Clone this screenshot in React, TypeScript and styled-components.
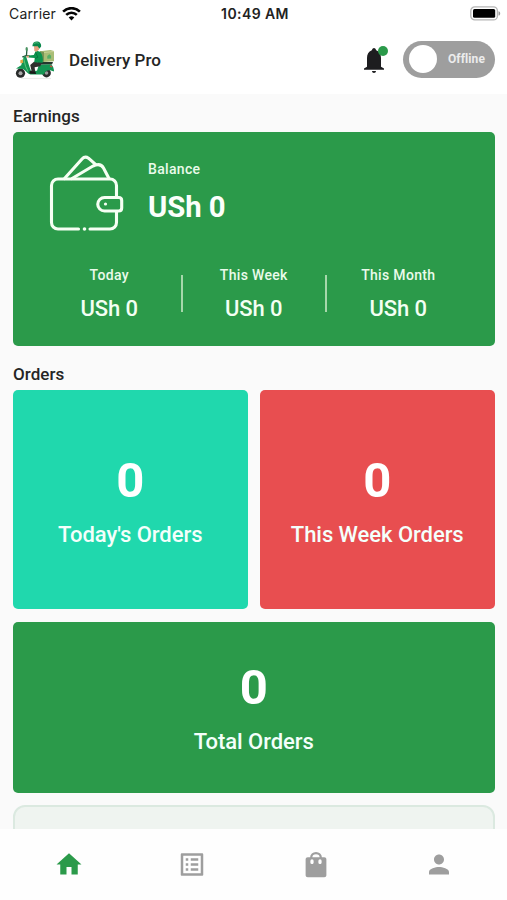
import React from "react";
import styled, { createGlobalStyle } from "styled-components";

const GREEN = "#2b9a4a";

const GlobalStyle = createGlobalStyle`
  * { box-sizing: border-box; }
  body { margin: 0; background: #fff; font-family: Roboto, "Liberation Sans", sans-serif; }
`;

const Screen = styled.div`
  width: 507px;
  height: 900px;
  display: flex;
  flex-direction: column;
  overflow: hidden;
  background: #fff;
`;

const StatusBar = styled.div`
  height: 27px;
  flex: none;
  display: grid;
  grid-template-columns: 1fr auto 1fr;
  align-items: center;
  padding: 0 6px 0 9px;
  font-family: Inter, sans-serif;
  font-size: 14px;
  color: #222;
`;

const Carrier = styled.div`
  display: flex;
  align-items: center;
  gap: 6px;
  letter-spacing: 0.15px;
`;

const Clock = styled.div`
  font-weight: 600;
  font-size: 14px;
  letter-spacing: 0.42px;
`;

const BatteryIcon = styled.svg`
  justify-self: end;
`;

const Header = styled.header`
  height: 67px;
  flex: none;
  display: flex;
  align-items: center;
  padding: 0 12px 2px 14px;
`;

const Title = styled.h1`
  flex: 1;
  margin: 0 0 0 13px;
  font-size: 17px;
  font-weight: 500;
  letter-spacing: 0.06px;
  color: #252525;
`;

const BellWrap = styled.div`
  position: relative;
  width: 24px;
  height: 28px;
  margin-right: 16px;
`;

const BellDot = styled.span`
  position: absolute;
  top: 0;
  right: -1px;
  width: 10px;
  height: 10px;
  border-radius: 50%;
  background: ${GREEN};
`;

const Toggle = styled.div`
  width: 92px;
  height: 37px;
  border-radius: 19px;
  background: #9e9e9e;
  display: flex;
  align-items: center;
  justify-content: space-between;
  padding: 0 10px 1px 6px;
  color: #ececec;
  font-size: 12px;
  font-weight: 700;
  letter-spacing: 0.1px;
`;

const Knob = styled.span`
  width: 28px;
  height: 28px;
  border-radius: 50%;
  background: #fff;
`;

const Content = styled.main`
  flex: 1;
  min-height: 0;
  overflow: hidden;
  padding: 11px 12.5px 0 13px;
  background: #fafafa;
`;

const SectionTitle = styled.h2<{ $spaced?: boolean }>`
  margin: ${(p) => (p.$spaced ? "17px 0 5px" : "0 0 5px")};
  height: 22px;
  line-height: 22px;
  font-size: 17px;
  font-weight: 500;
  letter-spacing: 0.04px;
  color: #252525;
`;

const EarningsCard = styled.section`
  height: 213.5px;
  border-radius: 5px;
  background: ${GREEN};
  color: #fff;
  padding-top: 21px;
`;

const BalanceRow = styled.div`
  display: flex;
  height: 80px;
  padding-left: 35px;
`;

const BalanceText = styled.div`
  margin-left: 22px;
  padding-top: 6px;
`;

const Label = styled.div`
  font-size: 14px;
  line-height: 20px;
  font-weight: 500;
  letter-spacing: 0.32px;
  color: #eafbea;
`;

const Balance = styled.div`
  margin-top: 8px;
  font-size: 29.3px;
  line-height: 40px;
  font-weight: 700;
  letter-spacing: -0.05px;
  color: #fbfffb;
`;

const Periods = styled.div`
  display: grid;
  grid-template-columns: 1fr 1fr 1fr;
  margin: 32px 24px 0;
`;

const Period = styled.div`
  position: relative;
  text-align: center;
  & + &::before {
    content: "";
    position: absolute;
    left: -1px;
    top: 10px;
    width: 2px;
    height: 37px;
    background: #a6d8ab;
  }
`;

const Amount = styled.div`
  margin-top: 9px;
  font-size: 22px;
  line-height: 30px;
  font-weight: 500;
  letter-spacing: -0.1px;
  color: #f3fff3;
`;

const Orders = styled.div`
  display: grid;
  grid-template-columns: 1fr 1fr;
  grid-template-rows: 219.5px 171px 110px;
  gap: 12.5px;
`;

const OrderTile = styled.div<{ $color: string; $wide?: boolean }>`
  grid-column: ${(p) => (p.$wide ? "1 / -1" : "auto")};
  display: flex;
  flex-direction: column;
  align-items: center;
  justify-content: center;
  border-radius: 5px;
  background: ${(p) => p.$color};
  color: #fff;
  padding-top: ${(p) => (p.$wide ? "1px" : "2px")};
`;

const Count = styled.div`
  font-size: 49px;
  line-height: 60px;
  font-weight: 700;
`;

const TileLabel = styled.div`
  margin-top: 9px;
  font-size: 22px;
  line-height: 30px;
  font-weight: 500;
  letter-spacing: -0.05px;
  color: #f4fffb;
`;

const NextCard = styled.div`
  grid-column: 1 / -1;
  border: 2px solid #dbe9e0;
  border-radius: 12px;
  background: #eff4f0;
`;

const BottomNav = styled.nav`
  height: 71px;
  flex: none;
  display: grid;
  grid-template-columns: repeat(4, 1fr);
  justify-items: center;
  padding: 20px 6px 0 7px;
  background: #fefefe;
`;

const NavItem = styled.button<{ $active?: boolean }>`
  border: 0;
  padding: 0;
  width: 30px;
  height: 31px;
  background: none;
  color: ${(p) => (p.$active ? GREEN : "#9e9e9e")};
`;

const NavSvg = styled.svg`
  display: block;
  width: 30px;
  height: 31px;
  fill: currentColor;
`;

const NAV = [
  { name: "Home", d: "M10 20v-6h4v6h5v-8h3L12 3 2 12h3v8z" },
  {
    name: "Orders",
    d: "M19 5v14H5V5h14m1.1-2H3.9c-.5 0-.9.4-.9.9v16.2c0 .4.4.9.9.9h16.2c.4 0 .9-.5.9-.9V3.9c0-.5-.5-.9-.9-.9zM11 7h6v2h-6V7zm0 4h6v2h-6v-2zm0 4h6v2h-6zM7 7h2v2H7zm0 4h2v2H7zm0 4h2v2H7z",
  },
  {
    name: "Bag",
    d: "M18.6 6.200H16.700a4.700 4.300 0 0 0-9.400 0H5.400C4.400 6.200 3.700 6.900 3.700 7.800v12.800c0 .9.7 1.600 1.700 1.600h13.200c1 0 1.700-.7 1.700-1.600V7.800c0-.9-.7-1.600-1.700-1.600zM12 3.700A2.900 2.500 0 0 1 14.900 6.200h-5.800A2.900 2.500 0 0 1 12 3.700zM8.800 11.600a1.300 1.300 0 0 1-1.300-1.300V9.100a1.300 1.300 0 0 1 2.600 0v1.200c0 .7-.6 1.300-1.300 1.300zm6.400 0a1.300 1.300 0 0 1-1.300-1.300V9.100a1.300 1.300 0 0 1 2.600 0v1.200c0 .7-.6 1.300-1.300 1.300z",
  },
  {
    name: "Profile",
    d: "M12 12c2.210 0 4-1.790 4-4s-1.790-4-4-4-4 1.790-4 4 1.790 4 4 4zm0 2c-2.670 0-8 1.340-8 4v2h16v-2c0-2.660-5.330-4-8-4z",
  },
];

const PERIODS = ["Today", "This Week", "This Month"];

function Wifi() {
  return (
    <svg width="19" height="14" viewBox="0 0 19 14" fill="none" stroke="#050505" strokeWidth="2.6">
      <path d="M1.100 4.600A12 12 0 0 1 17.900 4.600" />
      <path d="M4.200 7.900a7.600 7.600 0 0 1 10.600 0" />
      <path d="M9.500 13.400 6.700 10.600a4 4 0 0 1 5.600 0z" fill="#050505" stroke="none" />
    </svg>
  );
}

function Battery() {
  return (
    <BatteryIcon width="31" height="15" viewBox="0 0 31 15">
      <rect x="0.8" y="0.9" width="26.6" height="13" rx="4" fill="#fff" stroke="#b5b5b5" strokeWidth="1.3" />
      <rect x="3" y="3" width="22.2" height="8.800" rx="1.5" fill="#000" />
      <path d="M28.500 5.200c1 .3 1.700 1.100 1.700 2.200s-.7 1.900-1.700 2.200z" fill="#999" />
    </BatteryIcon>
  );
}

function Scooter() {
  return (
    <svg width="42" height="42" viewBox="0 -1 42 42">
      <path d="M7 38.500h30" stroke="#e9ece9" strokeWidth="1.200" />
      <path d="M26 11.200 36.500 10l3.500 1v10.200l-10 .8-4-1z" fill="#a9bd76" />
      <path d="M26 11.200 30 12v10l-4-1z" fill="#789455" />
      <path d="m30 12 10-1v1l-10 1z" fill="#c8cf94" />
      <path d="m33.300 16 2-1.700 1.800 1.500v2.700l-3.800.2z" fill="#55ad65" />
      <path d="M24 22h15l-1 2.500-14 .2z" fill="#25372d" />
      <circle cx="6.500" cy="33.200" r="4.600" fill="#292c2b" />
      <circle cx="6.500" cy="33.200" r="2" fill="#aaa" />
      <circle cx="32.500" cy="33" r="4.400" fill="#292c2b" />
      <circle cx="32.500" cy="33" r="1.800" fill="#999" />
      <path d="M9.500 17 12 16l3.500 11 1.500 4 6-.2 1.800-5.800 12-.8c2.200 1.500 3.200 4.400 3.300 7.300l-4.100-1.200c-3.600-.2-5.200 1.300-6 4.300H16.500c-2.700-.6-4.500-3.800-7.500-5.700L2 28.500l5.200-3.200z" fill="#149653" />
      <path d="m9.500 18 2.100 8.400 2.400 5" fill="none" stroke="#68cb82" strokeWidth=".9" />
      <path d="m8.200 17 4.300-1.600 3 .5M12.500 15l.4-5.500" fill="none" stroke="#245d3d" strokeWidth="1.300" />
      <ellipse cx="12.700" cy="9" rx="1.200" ry="2" fill="#4b9362" />
      <path d="m6.300 20.300 2.500-.8.6 3.300-3 .5z" fill="#e6a846" />
      <path d="m20 21.800 7.800.7-1.500 3.800-5.700 1 .8 6-5 .3-1.300-2 2.400-1.100-1.300-5.600z" fill="#30302e" />
      <path d="m15.300 33.500.7-2.200 5.400.4.8 2.300z" fill="#171a18" />
      <path d="m22 10.500 4 1.300c2.700 2.700 3.300 7.100 2.700 11l-8.500-.5.6-4.300-6.400-.5.3-2 5.100-.5z" fill="#0b934e" />
      <path d="m21.500 12.500 2.400 4.700-3 1.400" fill="none" stroke="#076d3b" strokeWidth=".8" />
      <path d="M20 5.500h5v4l-2.200 2.200-2.500-.8z" fill="#e6a27f" />
      <path d="M18.400 6.200c.2-3.300 1.900-4.600 4.300-4.600 3 0 4.800 2.100 4.400 5l-1.700 2.200-1.600-2.600z" fill="#08874a" />
      <path d="M19.500 3.900c1.700-1.400 3.400-1.500 5.100-.6" stroke="#55bd7b" fill="none" />
      <path d="m12.300 16 2.200-.8.8 2-2.400.5z" fill="#e0a17c" />
      <path d="m36 25.800 2.200 1" stroke="#d34c42" strokeWidth="1.300" />
    </svg>
  );
}

function Wallet() {
  return (
    <svg width="78" height="80" viewBox="0 0.5 78 80" fill="none" stroke="#f6fff3" strokeWidth="3.1" strokeLinecap="round" strokeLinejoin="round">
      <path d="M30.500 76.500H10a6.500 6.500 0 0 1-6.500-6.500V33a6.500 6.500 0 0 1 6.500-6.500h52a6.500 6.500 0 0 1 6.500 6.500v11.500M68.500 59V70a6.500 6.500 0 0 1-6.500 6.500H42" />
      <path d="M16.500 26 34 6.500q3-3.300 6.500-.8l7 6.200M24 26l21-12.500q7.500-3.500 10.500 2L61 26" />
      <path d="M56.500 45h14.200q3 0 3 3v7.500q0 3-3 3H56.500a6.750 6.750 0 0 1 0-13.500z" />
      <circle cx="57.500" cy="51.500" r="1.600" fill="#f6fff3" stroke="none" />
      <circle cx="36.500" cy="76.500" r="1.800" fill="#f6fff3" stroke="none" />
    </svg>
  );
}

export default function App() {
  return (
    <Screen>
      <GlobalStyle />
      <StatusBar>
        <Carrier>
          Carrier
          <Wifi />
        </Carrier>
        <Clock>10:49 AM</Clock>
        <Battery />
      </StatusBar>
      <Header>
        <Scooter />
        <Title>Delivery Pro</Title>
        <BellWrap>
          <svg width="22" height="28" viewBox="0 0 22 28" fill="#1d1d1f">
            <path d="M11 2c-.9 0-1.600.8-2.200 2.200C5.400 5.600 4 8.400 4 12v8.800L1 22.600v1.200h20v-1.200l-3-1.800V12c0-3.600-1.400-6.400-4.800-7.800C12.600 2.800 11.900 2 11 2zM9 25.100h4c0 1.200-.9 2-2 2s-2-.8-2-2z" />
          </svg>
          <BellDot />
        </BellWrap>
        <Toggle>
          <Knob />
          Offline
        </Toggle>
      </Header>
      <Content>
        <SectionTitle>Earnings</SectionTitle>
        <EarningsCard>
          <BalanceRow>
            <Wallet />
            <BalanceText>
              <Label>Balance</Label>
              <Balance>USh 0</Balance>
            </BalanceText>
          </BalanceRow>
          <Periods>
            {PERIODS.map((name) => (
              <Period key={name}>
                <Label>{name}</Label>
                <Amount>USh 0</Amount>
              </Period>
            ))}
          </Periods>
        </EarningsCard>
        <SectionTitle $spaced>Orders</SectionTitle>
        <Orders>
          <OrderTile $color="#20d8ad">
            <Count>0</Count>
            <TileLabel>Today's Orders</TileLabel>
          </OrderTile>
          <OrderTile $color="#e84e50">
            <Count>0</Count>
            <TileLabel>This Week Orders</TileLabel>
          </OrderTile>
          <OrderTile $color={GREEN} $wide>
            <Count>0</Count>
            <TileLabel>Total Orders</TileLabel>
          </OrderTile>
          <NextCard />
        </Orders>
      </Content>
      <BottomNav>
        {NAV.map((item, i) => (
          <NavItem key={item.name} $active={i === 0} aria-label={item.name}>
            <NavSvg viewBox="0 0 24 24">
              <path fillRule="evenodd" d={item.d} />
            </NavSvg>
          </NavItem>
        ))}
      </BottomNav>
    </Screen>
  );
}
